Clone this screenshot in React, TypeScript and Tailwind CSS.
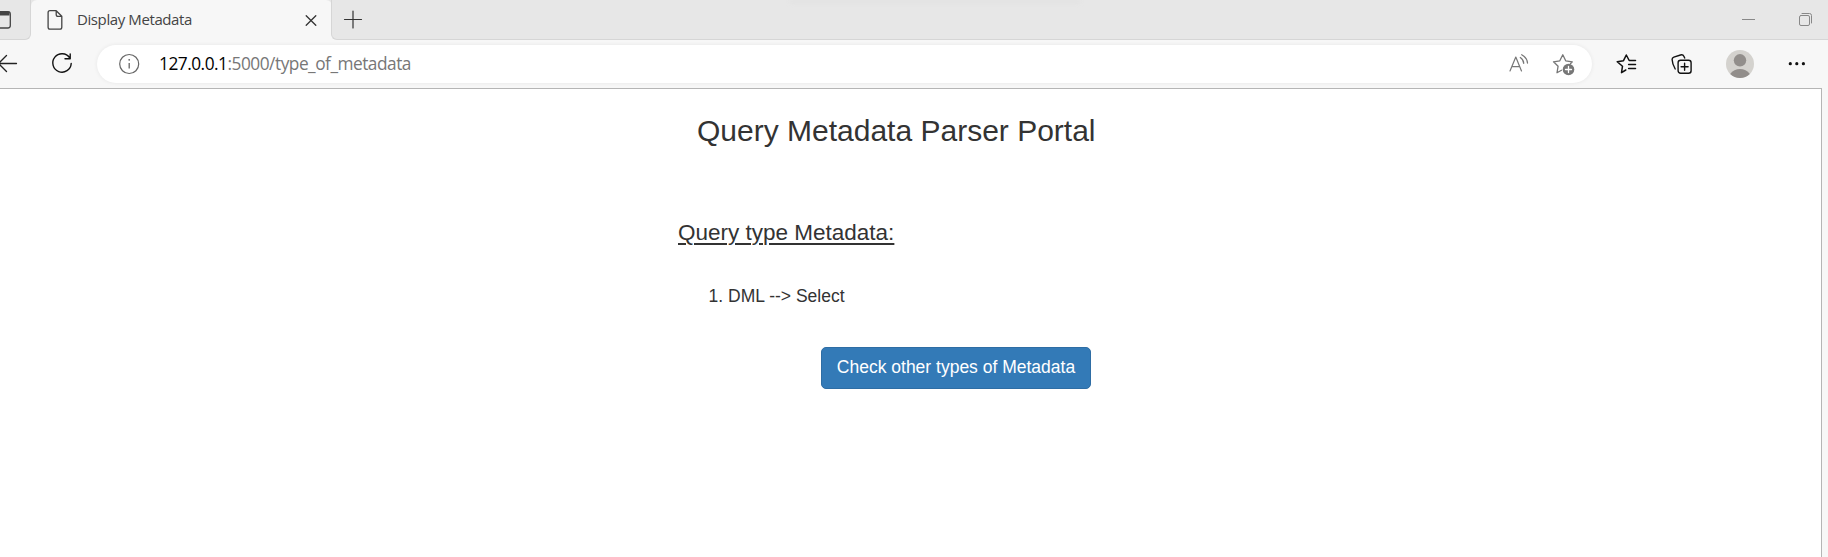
import React from 'react';

type IconProps = { children: React.ReactNode; className?: string; w: number; h: number };

function Icon({ children, className = '', w, h }: IconProps) {
  return (
    <svg width={w} height={h} viewBox={`0 0 ${w} ${h}`} fill="none" stroke="currentColor" strokeWidth="1.3" strokeLinecap="round" strokeLinejoin="round" className={`shrink-0 ${className}`}>
      {children}
    </svg>
  );
}

function TabStrip() {
  return (
    <div className="relative flex h-10 bg-linear-to-b from-[#e7e7e7] from-50% to-[#f7f7f7] to-50%">
      <div className="absolute left-[790px] top-0 h-[3px] w-[290px] bg-[#dedede] opacity-70 blur-[2px]" />
      <div className="h-10 w-[31px] shrink-0 rounded-br-[6px] border-b border-r border-[#d6d6d6] bg-[#e7e7e7]">
        <Icon w={14} h={39} className="text-[#444]">
          <rect x="-6" y="11.7" width="16.3" height="16.3" rx="2.5" />
          <path d="M-4 13.5H9.5" strokeWidth="4" strokeLinecap="butt" />
        </Icon>
      </div>
      <div className="flex w-[301px] shrink-0 items-center rounded-t-[6px] bg-[#f7f7f7]">
        <Icon w={18} h={40} className="ml-[15px] text-[#444]">
          <path d="M4 10.7H10.2L15.8 16.3V27.3Q15.8 29.2 13.9 29.2H4Q2.1 29.2 2.1 27.3V12.6Q2.1 10.7 4 10.7ZM10.2 10.7V14.4Q10.2 16.3 12.1 16.3H15.8" />
        </Icon>
        <span className="mb-0.5 ml-[13px] whitespace-nowrap font-['Open_Sans',sans-serif] text-[15px] tracking-[-0.4px] text-[#444]">Display Metadata</span>
        <Icon w={12} h={40} className="ml-auto mr-[15px] text-[#333]">
          <path d="M1.2 15.7L10.8 25.3M10.8 15.7L1.2 25.3" />
        </Icon>
      </div>
      <div className="-ml-px flex grow rounded-bl-[6px] border-b border-l border-[#d6d6d6] bg-[#e7e7e7]">
        <Icon w={20} h={39} className="ml-[11px] text-[#333]">
          <path d="M1.5 19.5H18.5M10 11V28" strokeWidth="1.2" />
        </Icon>
        <Icon w={14} h={39} className="ml-auto text-[#888]">
          <path d="M0 19.5H13" strokeWidth="1" strokeLinecap="butt" />
        </Icon>
        <Icon w={14} h={39} className="ml-[43px] mr-[15px] text-[#888]">
          <rect x=".5" y="15.5" width="10" height="10" rx="1.5" strokeWidth="1" />
          <path d="M3 13.5H10.5Q12.5 13.5 12.5 15.5V23" strokeWidth="1" />
        </Icon>
      </div>
    </div>
  );
}

function Toolbar() {
  return (
    <div className="flex h-12 items-center bg-[#f7f7f7]">
      <Icon w={18} h={48} className="text-[#222]">
        <path d="M16.5 23.5H-3M6.5 15.5L-1.5 23.5L6.5 31.5" />
      </Icon>
      <Icon w={22} h={48} className="ml-[33px] text-[#111]">
        <path d="M18.7 17.9A9.2 9.2 0 1 0 20.2 23.5M14 18.8H19.2V13.9" strokeWidth="1.4" />
      </Icon>
      <div className="mb-px ml-6 flex h-[38px] w-[1495px] shrink-0 items-center rounded-full bg-white shadow-[0_0_4px_rgba(0,0,0,0.07)]">
        <Icon w={22} h={38} className="ml-[21px] text-[#666]">
          <circle cx="11.2" cy="19" r="9.5" strokeWidth="1.2" />
          <path d="M11.2 18V23.5" strokeLinecap="butt" />
          <circle cx="11.2" cy="14.8" r=".9" fill="currentColor" stroke="none" />
        </Icon>
        <span className="ml-[19px] whitespace-nowrap font-['Open_Sans',sans-serif] text-[17.3px] tracking-[-0.49px] text-[#777]">
          <span className="text-black">127.0.0.1</span>:5000/type_of_metadata
        </span>
        <Icon w={22} h={38} className="ml-auto text-[#777]">
          <path d="M2 26L7.8 12L13.5 26M4 21.7H11.6" strokeWidth="1.2" />
          <path d="M12.3 12.5Q15.5 14.5 15.7 18.3M13.7 9.7Q19 12.5 19.5 18" />
        </Icon>
        <Icon w={23} h={38} className="ml-[22px] mr-[17px] text-[#777]">
          <path d="M9.5 25.3L5 27.8L6.1 21.2L1.5 16.8L7.8 15.8L10.8 9.8L13.7 15.8L20.3 16.8L18.4 18.7" />
          <circle cx="16.5" cy="24.5" r="5.8" fill="currentColor" stroke="none" />
          <path d="M13.5 24.5H19.5M16.5 21.5V27.5" stroke="white" />
        </Icon>
      </div>
      <Icon w={22} h={48} className="ml-[24px] text-[#111]">
        <path d="M9.8 30L5.5 32.7L6.5 26.2L1.2 21.7L7.5 20.7L10.3 15L13.2 20.5H19.5M12.6 24.5H19.5M12.6 28.5H19.5" strokeWidth="1.5" />
      </Icon>
      <Icon w={22} h={48} className="ml-[33px] text-[#111]">
        <rect x="7.1" y="20.3" width="13" height="13" rx="2.5" strokeWidth="1.4" />
        <path d="M13.6 23.3V30.3M10.1 26.8H17.1M4.2 29Q1.3 24 1.1 19.5Q1 17.7 2.8 17.1L9.5 15Q12 14.3 13 16.5L13.7 18" strokeWidth="1.4" />
      </Icon>
      <Icon w={28} h={48} className="ml-[33px] text-[#928e8b]">
        <circle cx="14" cy="24" r="14" fill="#d4d2ce" stroke="none" />
        <circle cx="14" cy="20.3" r="6.2" fill="currentColor" stroke="none" />
        <path d="M4.2 34A12 12 0 0 1 23.8 34A14 14 0 0 1 4.2 34Z" fill="currentColor" stroke="none" />
      </Icon>
      <Icon w={18} h={48} className="ml-[34px] text-[#111]">
        <g fill="currentColor" stroke="none">
          <circle cx="2.3" cy="23.7" r="1.6" />
          <circle cx="8.8" cy="23.7" r="1.6" />
          <circle cx="15.4" cy="23.7" r="1.6" />
        </g>
      </Icon>
    </div>
  );
}

export default function App() {
  return (
    <div className="flex h-[557px] w-[1828px] flex-col overflow-hidden bg-[#f7f7f7]">
      <TabStrip />
      <Toolbar />
      <main className="mr-1.5 grow border-r border-t border-[#b5b5b5] bg-white font-['Liberation_Sans',Arial,sans-serif] text-[#333]">
        <h3 className="ml-[697px] mt-[25px] text-[30px] leading-[33px]">Query Metadata Parser Portal</h3>
        <h4 className="ml-[678px] mt-[73px] text-[22.5px] leading-[25px] underline decoration-2 underline-offset-[3px]">Query type Metadata:</h4>
        <ol className="ml-[728px] mt-[39px] list-decimal text-[17.5px] leading-[25px]">
          <li>DML --&gt; Select</li>
        </ol>
        <button className="ml-[821px] mt-[38px] h-[42px] w-[270px] whitespace-nowrap rounded-[5px] border border-[#2e6da4] bg-[#337ab7] pb-0.5 text-[17.5px] leading-[25px] text-white">
          Check other types of Metadata
        </button>
      </main>
    </div>
  );
}
